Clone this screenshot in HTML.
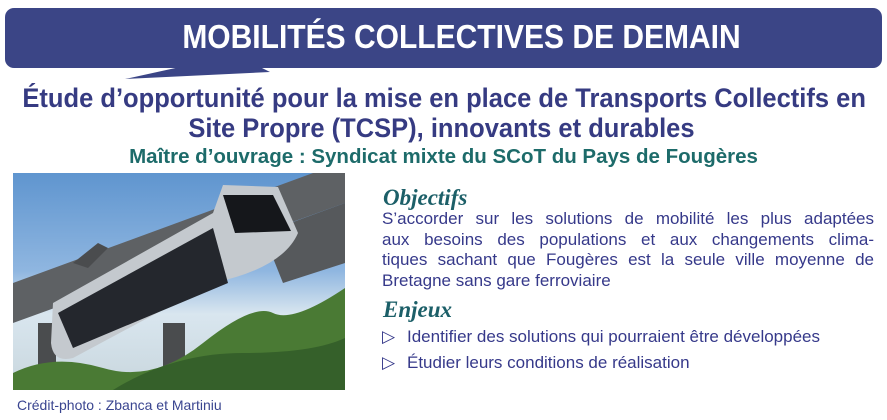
<!DOCTYPE html>
<html><head><meta charset="utf-8"><style>
body{margin:0;width:887px;height:420px;background:#fff;position:relative;overflow:hidden;font-family:"Liberation Sans",sans-serif}
.ban{position:absolute;left:5px;top:8px;width:877px;height:60px;background:#3b4586;border-radius:9px}
.bt{position:absolute;left:18px;top:21px;width:887px;text-align:center;color:#fff;font-weight:bold;font-size:30px;letter-spacing:0;transform:scaleY(1.1)}
.t{position:absolute;left:-2px;width:887px;text-align:center;color:#363b82;font-weight:bold;font-size:27px;line-height:30px;transform:scaleX(0.945);white-space:nowrap}
.s{position:absolute;left:0;width:887px;text-align:center;color:#1d6b6a;font-weight:bold;font-size:20.5px;white-space:nowrap}
.h{position:absolute;left:383px;color:#1c5f68;font-family:"Liberation Serif",serif;font-style:italic;font-weight:bold;font-size:23px}
.p{position:absolute;left:382px;width:492px;color:#36398a;font-size:17px;line-height:20.7px}
.p div{text-align:justify;text-align-last:justify;white-space:nowrap}
.p div.l{text-align-last:left}
.b{position:absolute;left:382px;color:#36398a;font-size:17px}
.b span{display:inline-block;width:25px}
.img{position:absolute;left:13px;top:173px;width:332px;height:217px;overflow:hidden;background:linear-gradient(180deg,#5f95cf 0%,#8fb6e0 45%,#d9e6ef 65%,#c8d6dd 100%)}
.cr{position:absolute;left:17px;top:397px;color:#3a4590;font-size:14px}
</style></head><body>
<div class="ban"></div>
<svg style="position:absolute;left:0;top:0" width="887" height="90"><polygon points="180,67 125,79 270,72 260,67" fill="#3b4586"/></svg>
<div class="bt">MOBILITÉS COLLECTIVES DE DEMAIN</div>
<div class="t" style="top:83px">Étude d’opportunité pour la mise en place de Transports Collectifs en</div>
<div class="t" style="top:113px">Site Propre (TCSP), innovants et durables</div>
<div class="s" style="top:145px">Maître d’ouvrage : Syndicat mixte du SCoT du Pays de Fougères</div>
<div class="img"><svg width="332" height="217">
<polygon points="0,110 300,0 332,0 332,30 0,150" fill="#5e6164"/>
<polygon points="250,60 332,30 332,90 270,110" fill="#56595c"/>
<polygon points="75,95 95,75 85,70 60,90" fill="#4a4c4e"/>
<rect x="150" y="150" width="22" height="67" fill="#4a4c4e"/>
<rect x="25" y="150" width="18" height="67" fill="#4a4c4e"/>
<path d="M40,130 L200,40 L210,12 L265,14 L285,60 Q270,95 200,110 L60,185 Q40,190 38,170Z" fill="#c4c9ce"/>
<polygon points="45,140 200,55 215,110 60,175" fill="#24272d"/>
<polygon points="210,22 260,22 278,58 222,60" fill="#15171b"/>
<path d="M0,200 Q40,180 90,195 T190,170 T260,140 T332,115 L332,217 L0,217Z" fill="#4a7a34"/>
<path d="M100,217 Q160,180 230,180 T332,165 L332,217Z" fill="#35602a"/>
</svg></div>
<div class="cr">Crédit-photo : Zbanca et Martiniu</div>
<div class="h" style="top:185px">Objectifs</div>
<div class="p" style="top:209px"><div>S’accorder sur les solutions de mobilité les plus adaptées</div><div>aux besoins des populations et aux changements clima-</div><div>tiques sachant que Fougères est la seule ville moyenne de</div><div class="l">Bretagne sans gare ferroviaire</div></div>
<div class="h" style="top:297px">Enjeux</div>
<div class="b" style="top:327px"><span>▷</span>Identifier des solutions qui pourraient être développées</div>
<div class="b" style="top:353px"><span>▷</span>Étudier leurs conditions de réalisation</div>
</body></html>
